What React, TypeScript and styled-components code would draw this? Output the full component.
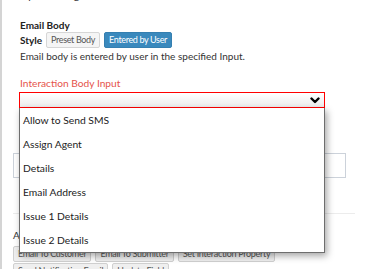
import styled, { createGlobalStyle } from "styled-components";

const GlobalStyle = createGlobalStyle`
  html, body {
    margin: 0;
    padding: 0;
    background: #fff;
    overflow: hidden;
  }
  body {
    font-family: Lato, "Open Sans", sans-serif;
    color: #333;
  }
`;

const options = [
  "Allow to Send SMS",
  "Assign Agent",
  "Details",
  "Email Address",
  "Issue 1 Details",
  "Issue 2 Details",
];

const actions = [
  ["Email To Customer", "Email To Submitter", "Set Interaction Property"],
  ["Send Notification Email", "Update Field"],
];

const Chevron = () => (
  <svg width="10" height="7" viewBox="0 0 10 7">
    <polyline
      points="1.5,1.5 5,5 8.5,1.5"
      fill="none"
      stroke="#000"
      strokeWidth="2.4"
      strokeLinecap="round"
      strokeLinejoin="round"
    />
  </svg>
);

const App = () => {
  return (
    <>
      <GlobalStyle />
      <Page>
        <Hint>Optional: logout into the sent email.</Hint>
        <Section>
          <FieldTitle>Email Body</FieldTitle>
          <StyleRow>
            <FieldTitle>Style</FieldTitle>
            <Toggle>Preset Body</Toggle>
            <Toggle $active>Entered by User</Toggle>
          </StyleRow>
          <Description>
            Email body is entered by user in the specified Input.
          </Description>
          <ErrorLabel>Interaction Body Input</ErrorLabel>
          <SelectWrap>
            <Select>
              <Chevron />
            </Select>
            <Menu>
              {options.map((o) => (
                <MenuItem key={o}>{o}</MenuItem>
              ))}
            </Menu>
          </SelectWrap>
        </Section>
        <Lower>
          <TextBox />
          <Divider />
          <ActionsLabel>Actions</ActionsLabel>
          {actions.map((row, i) => (
            <ActionRow key={i}>
              {row.map((a) => (
                <ActionButton key={a}>{a}</ActionButton>
              ))}
            </ActionRow>
          ))}
        </Lower>
      </Page>
    </>
  );
};

export default App;

const Page = styled.div`
  height: 269px;
  border-left: 2px solid #d4d4d4;
  box-sizing: border-box;
  overflow: hidden;
`;

const Hint = styled.div`
  margin: -11px 0 2px 18px;
  font-size: 10.5px;
  line-height: 13px;
  color: #333;
`;

const Section = styled.div`
  padding: 14px 0 0 18px;
  display: flex;
  flex-direction: column;
`;

const FieldTitle = styled.div`
  font-size: 10px;
  font-weight: 700;
  line-height: 14px;
  color: #222;
`;

const StyleRow = styled.div`
  display: flex;
  align-items: center;
  gap: 4px;
`;

const Toggle = styled.div<{ $active?: boolean }>`
  font-size: 9px;
  letter-spacing: -0.35px;
  line-height: 14px;
  padding: 0 4px;
  border: 1px solid ${({ $active }) => ($active ? "#357fb0" : "#d6d6d6")};
  border-radius: 2px;
  background: ${({ $active }) => ($active ? "#3a89bd" : "#f5f5f5")};
  color: ${({ $active }) => ($active ? "#fff" : "#555")};
`;

const Description = styled.div`
  font-size: 10px;
  line-height: 14px;
  margin-top: 1px;
  color: #333;
`;

const ErrorLabel = styled.div`
  margin-top: 13px;
  font-size: 10.2px;
  line-height: 14px;
  color: #e5534b;
`;

const SelectWrap = styled.div`
  position: relative;
  width: 306px;
  margin: 2px 0 0 -1px;
`;

const Select = styled.div`
  height: 14px;
  border: 1px solid #f00;
  background: linear-gradient(#fff, #ececec);
  display: flex;
  align-items: center;
  justify-content: flex-end;
  padding-right: 4px;
`;

const Menu = styled.div`
  position: absolute;
  top: 16px;
  left: 0;
  right: 0;
  z-index: 2;
  background: #fff;
  border: 1px solid #6e6e6e;
  border-top: none;
  box-shadow: 2px 3px 7px rgba(0, 0, 0, 0.35);
`;

const MenuItem = styled.div`
  height: 24px;
  line-height: 24px;
  padding-left: 3px;
  font-size: 10.3px;
  color: #222;
`;

const Lower = styled.div`
  padding: 45px 0 0 11px;
`;

const TextBox = styled.div`
  width: 333px;
  height: 25px;
  box-sizing: border-box;
  border: 1px solid #ccd2da;
`;

const Divider = styled.div`
  width: 342px;
  height: 1px;
  background: #ececec;
  margin-top: 35px;
`;

const ActionsLabel = styled.div`
  font-size: 10px;
  line-height: 14px;
  margin: 14px 0 4px;
  color: #333;
`;

const ActionRow = styled.div`
  display: flex;
  gap: 4px;
  margin-top: 1px;
`;

const ActionButton = styled.div`
  font-size: 9px;
  letter-spacing: -0.3px;
  line-height: 14px;
  padding: 0 4px;
  border: 1px solid #d0d0d0;
  border-radius: 2px;
  background: #efefef;
  color: #555;
`;
